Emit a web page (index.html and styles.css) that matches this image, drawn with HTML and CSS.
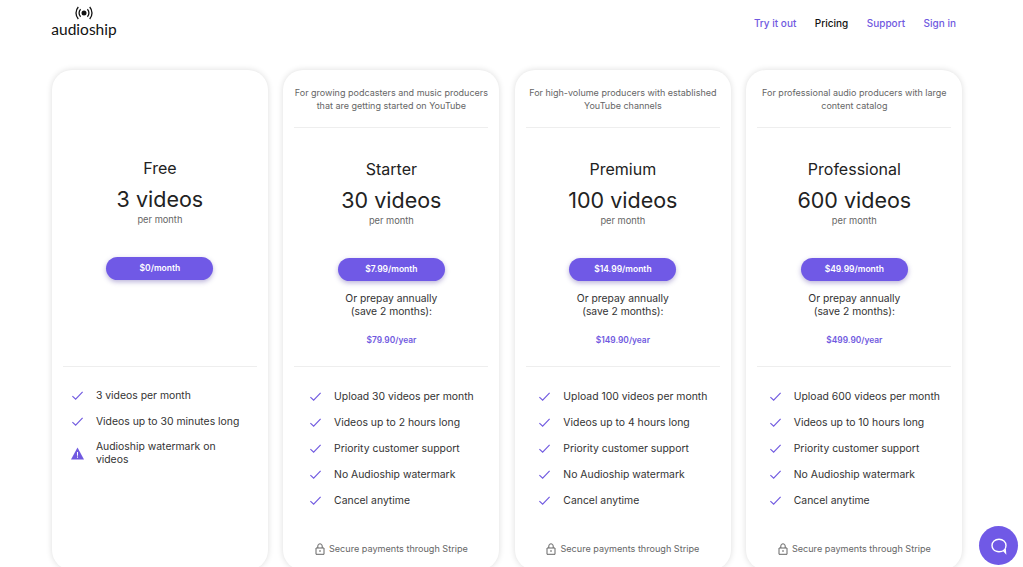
FILE: index.html
```html
<!DOCTYPE html>
<html lang="en">
<head>
<meta charset="utf-8">
<title>Audioship pricing</title>
<link rel="stylesheet" href="styles.css">
</head>
<body>
<svg class="defs" width="0" height="0" aria-hidden="true">
  <symbol id="check" viewBox="0 0 14 14"><path d="M1.500 7.600 5 11 12.500 3" fill="none" stroke="#7059e0" stroke-width="1.200"/></symbol>
  <symbol id="lock" viewBox="0 0 10 12"><path d="M1 5h8v6.300H1zM2.800 5V3a2.200 2.200 0 0 1 4.400 0v2" fill="none" stroke="#666" stroke-width="1"/><path d="M5 7v2" stroke="#666"/></symbol>
</svg>
<header class="topbar">
  <a class="logo">
    <svg class="logo-icon" viewBox="0 0 18 14" aria-hidden="true"><circle cx="9" cy="7" r="2.500" fill="#111"/><path d="M5.600 3.200a5.500 5.500 0 0 0 0 7.600M12.400 3.200a5.500 5.500 0 0 1 0 7.600M3.300 1a9 9 0 0 0 0 12M14.700 1a9 9 0 0 1 0 12" fill="none" stroke="#111" stroke-width="1.300"/></svg>
    <span class="logo-text">audioship</span>
  </a>
  <nav class="nav">
    <a>Try it out</a>
    <a class="current">Pricing</a>
    <a>Support</a>
    <a>Sign in</a>
  </nav>
</header>
<main class="plans">
  <section class="card free">
    <p class="desc"></p>
    <h2 class="name">Free</h2>
    <p class="count">3 videos</p>
    <p class="period">per month</p>
    <a class="btn">$0/month</a>
    <div class="annual"></div>
    <ul class="features wrap">
      <li><svg class="ico"><use href="#check"/></svg>3 videos per month</li>
      <li><svg class="ico"><use href="#check"/></svg>Videos up to 30 minutes long</li>
      <li class="warn"><svg class="ico" viewBox="0 0 14 14"><path d="M7 .5 14 13.500H0z" fill="#7059e0"/><path d="M7 5.500v4M7 10.300v1.200" stroke="#fff" stroke-width="1.100"/></svg>Audioship watermark on videos</li>
    </ul>
  </section>
  <section class="card">
    <p class="desc">For growing podcasters and music producers that are getting started on YouTube</p>
    <h2 class="name">Starter</h2>
    <p class="count">30 videos</p>
    <p class="period">per month</p>
    <a class="btn">$7.99/month</a>
    <div class="annual"><p>Or prepay annually<br>(save 2 months):</p><a>$79.90/year</a></div>
    <ul class="features">
      <li><svg class="ico"><use href="#check"/></svg>Upload 30 videos per month</li>
      <li><svg class="ico"><use href="#check"/></svg>Videos up to 2 hours long</li>
      <li><svg class="ico"><use href="#check"/></svg>Priority customer support</li>
      <li><svg class="ico"><use href="#check"/></svg>No Audioship watermark</li>
      <li><svg class="ico"><use href="#check"/></svg>Cancel anytime</li>
    </ul>
    <p class="secure"><svg class="lock"><use href="#lock"/></svg>Secure payments through Stripe</p>
  </section>
  <section class="card">
    <p class="desc">For high-volume producers with established YouTube channels</p>
    <h2 class="name">Premium</h2>
    <p class="count">100 videos</p>
    <p class="period">per month</p>
    <a class="btn">$14.99/month</a>
    <div class="annual"><p>Or prepay annually<br>(save 2 months):</p><a>$149.90/year</a></div>
    <ul class="features">
      <li><svg class="ico"><use href="#check"/></svg>Upload 100 videos per month</li>
      <li><svg class="ico"><use href="#check"/></svg>Videos up to 4 hours long</li>
      <li><svg class="ico"><use href="#check"/></svg>Priority customer support</li>
      <li><svg class="ico"><use href="#check"/></svg>No Audioship watermark</li>
      <li><svg class="ico"><use href="#check"/></svg>Cancel anytime</li>
    </ul>
    <p class="secure"><svg class="lock"><use href="#lock"/></svg>Secure payments through Stripe</p>
  </section>
  <section class="card">
    <p class="desc">For professional audio producers with large content catalog</p>
    <h2 class="name">Professional</h2>
    <p class="count">600 videos</p>
    <p class="period">per month</p>
    <a class="btn">$49.99/month</a>
    <div class="annual"><p>Or prepay annually<br>(save 2 months):</p><a>$499.90/year</a></div>
    <ul class="features">
      <li><svg class="ico"><use href="#check"/></svg>Upload 600 videos per month</li>
      <li><svg class="ico"><use href="#check"/></svg>Videos up to 10 hours long</li>
      <li><svg class="ico"><use href="#check"/></svg>Priority customer support</li>
      <li><svg class="ico"><use href="#check"/></svg>No Audioship watermark</li>
      <li><svg class="ico"><use href="#check"/></svg>Cancel anytime</li>
    </ul>
    <p class="secure"><svg class="lock"><use href="#lock"/></svg>Secure payments through Stripe</p>
  </section>
</main>
<button class="chat" aria-label="Open chat">
  <svg viewBox="0 0 18 18" width="18" height="18"><path d="M9 2.200c4 0 7 2.600 7 6.300 0 3.700-3 6.200-7 6.200-1 0-2-.1-3-.5-1-.3-2-1-2.600-1.800C2.500 11.200 2 10 2 8.500 2 4.800 5 2.200 9 2.200Z M13 13l2.500 2.700-.3-4" fill="none" stroke="#fff" stroke-width="1.400"/></svg>
</button>
</body>
</html>
```
FILE: styles.css
```css
* { box-sizing: border-box; }
html, body { height: 567px; overflow: hidden; }
body { margin: 0; background: #fff; color: #222; font-family: Inter, "Liberation Sans", sans-serif; font-size: 10.400px; }
p, h2, ul { margin: 0; padding: 0; }
.defs { position: absolute; }
.topbar { height: 70px; padding: 0 67px 22px 52px; display: flex; justify-content: space-between; align-items: flex-start; }
.logo { display: flex; flex-direction: column; align-items: center; padding-top: 6px; width: 64px; }
.logo-icon { width: 18px; height: 14px; }
.logo-text { font-family: Lato, sans-serif; font-size: 15.500px; line-height: 19px; color: #111; }
.nav { display: flex; gap: 18.500px; padding-top: 16px; font-size: 10px; line-height: 14px; font-weight: 500; color: #7059e0; }
.nav .current { color: #111; }
.plans { display: flex; gap: 15.700px; padding: 0 52px; }
.card { width: 215.800px; height: 500px; flex: none; padding: 0 11px; border-radius: 20px; background: #fff; box-shadow: 0 0 6px rgba(0,0,0,.14); display: flex; flex-direction: column; align-items: center; text-align: center; }
.desc { width: 100%; height: 58px; padding: 16px 0 0; border-bottom: 1px solid #eee; font-size: 9px; line-height: 13px; color: #666; }
.free .desc { height: 57px; border-bottom: 0; }
.name { margin-top: 31px; font-size: 16px; line-height: 20px; font-weight: 400; color: #222; }
.count { margin-top: 6px; font-size: 21.500px; line-height: 30px; color: #222; }
.period { margin-top: 0; font-size: 9.300px; line-height: 12px; color: #666; }
.btn { margin-top: 31px; width: 107px; height: 23px; border-radius: 12px; background: #7059e6; color: #fff; font-size: 8.500px; font-weight: 600; line-height: 23px; box-shadow: 0 2px 5px rgba(60,40,150,.35); }
.annual { height: 86px; width: 100%; border-bottom: 1px solid #eee; padding-top: 11px; font-size: 10.300px; line-height: 13px; color: #333; }
.free .annual { height: 87px; padding: 0; }
.annual a { display: block; margin-top: 16px; font-size: 8.400px; font-weight: 600; color: #7059e0; }
.features { list-style: none; width: fit-content; margin-top: 16px; text-align: left; color: #333; font-size: 10.400px; line-height: 13px; }
.features.wrap { width: 178px; margin-top: 15px; }
.features li { display: flex; align-items: center; gap: 12px; min-height: 26px; }
.features .warn { margin-top: 6px; }
.ico { width: 13px; height: 13px; flex: none; }
.secure { margin-top: auto; margin-bottom: 15px; display: flex; align-items: center; gap: 4px; font-size: 9.100px; line-height: 12px; color: #666; }
.lock { width: 10px; height: 12px; }
.chat { position: absolute; left: 979px; top: 526px; width: 39px; height: 39px; padding: 0; border: 0; border-radius: 50%; background: #7059e6; display: flex; align-items: center; justify-content: center; }
```
